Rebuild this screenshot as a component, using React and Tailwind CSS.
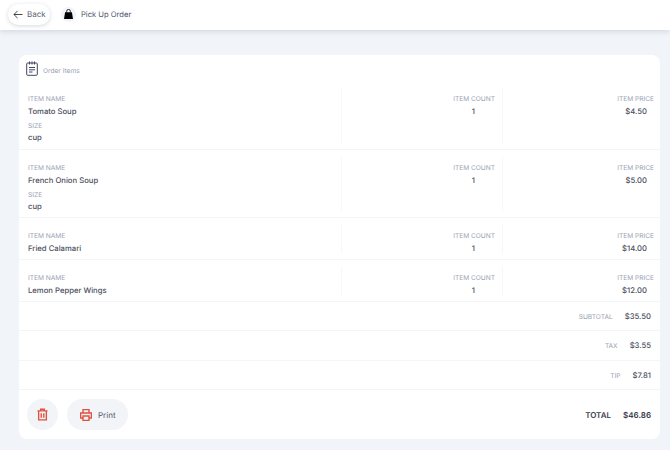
import React from "react";

const font = { fontFamily: "Inter, sans-serif" };

function Label({ children, className = "" }) {
  return <div className={"text-[6.6px] leading-[10px] text-[#9a9fb3] uppercase " + className}>{children}</div>;
}
function Val({ children, className = "" }) {
  return <div className={"text-[7.7px] leading-[12px] font-medium text-[#4b4f60] " + className}>{children}</div>;
}

function Row({ name, count, price, size, h }) {
  return (
    <div className={"flex border-b border-[#f4f5f9] pt-[7px] pb-[6px] " + h}>
      <div className="w-[323px] pl-[9px] pt-[6px] border-r border-[#f6f7fa]">
        <Label>Item Name</Label>
        <Val className="mt-[1.6px]">{name}</Val>
        {size && (
          <>
            <Label className="mt-[3px]">Size</Label>
            <Val className="mt-[1px]">{size}</Val>
          </>
        )}
      </div>
      <div className="w-[161px] pr-[7px] pt-[6px] border-r border-[#f6f7fa] flex flex-col items-end">
        <Label>Item Count</Label>
        <Val className="mt-[1.6px] pr-[20px]">{count}</Val>
      </div>
      <div className="flex-1 pr-[6px] pt-[6px] flex flex-col items-end">
        <Label>Item Price</Label>
        <Val className="mt-[1.6px] pr-[7px]">{price}</Val>
      </div>
    </div>
  );
}

function Summary({ label, value, h }) {
  return (
    <div className={"flex items-center justify-end pr-[9px] gap-[12px] border-b border-[#f4f5f9] " + h}>
      <Label>{label}</Label>
      <Val>{value}</Val>
    </div>
  );
}

export default function App() {
  return (
    <div style={font} className="w-[670px] h-[450px] bg-[#f1f4f9] overflow-hidden [text-rendering:geometricPrecision]">
      <header className="h-[30px] bg-white shadow-[0_1px_6px_rgba(50,60,90,0.18)] flex items-center pl-[8px] pb-[2px]">
        <div className="h-[21px] w-[42px] rounded-full bg-white shadow-[0_1px_4px_rgba(50,60,90,0.2)] flex items-center pl-[5px] gap-[4px] text-[8px] text-[#5a5f70]">
          <svg width="10" height="9" viewBox="0 0 11 10" fill="none" stroke="#333" strokeWidth="1">
            <path d="M10.5 5H1M5 1L1 5l4 4" />
          </svg>
          Back
        </div>
        <div className="ml-[11px] w-[15px] h-[15px] rounded-full bg-[#eef5fc] flex items-center justify-center">
          <svg width="9" height="10" viewBox="0 0 10 11">
            <path d="M1.2 3.6h7.6L10 11H0z" fill="#000" />
            <path d="M3 4V2.4a2 2 0 0 1 4 0V4" fill="none" stroke="#000" strokeWidth="0.9" />
          </svg>
        </div>
        <div className="ml-[5px] pt-[1px] text-[7.6px] text-[#50556a]">Pick Up Order</div>
      </header>

      <main className="mt-[25px] mx-[19px] w-[641px] h-[384px] bg-white rounded-[8px] flex flex-col">
        <div className="h-[26px] shrink-0 flex items-end pl-[7px] gap-[5px]">
          <svg width="12" height="15" viewBox="0 0 12 15" fill="none" stroke="#3f4560" strokeWidth="1" className="mb-[5px]">
            <rect x="0.7" y="2" width="10.6" height="12.3" rx="1" />
            <path d="M3.5 0.5v3M6 0.5v3M8.5 0.5v3M3 6.5h6M3 8.8h6M3 11h3.5" />
          </svg>
          <div className="text-[6.6px] leading-[10px] text-[#9a9fb3] mb-[5px]">Order Items</div>
        </div>
        <Row name="Tomato Soup" count="1" price="$4.50" size="cup" h="h-[69px]" />
        <Row name="French Onion Soup" count="1" price="$5.00" size="cup" h="h-[68px]" />
        <Row name="Fried Calamari" count="1" price="$14.00" h="h-[42px]" />
        <Row name="Lemon Pepper Wings" count="1" price="$12.00" h="h-[42px]" />
        <Summary label="Subtotal" value="$35.50" h="h-[29px] pt-[1px]" />
        <Summary label="Tax" value="$3.55" h="h-[30px] pt-[1px]" />
        <Summary label="Tip" value="$7.81" h="h-[29px] pt-[2px]" />
        <div className="flex-1 flex items-center pl-[8px] pr-[9px]">
          <div className="w-[31px] h-[31px] rounded-full bg-[#f3f4f8] flex items-center justify-center">
            <svg width="11" height="13" viewBox="0 0 12 13" fill="none" stroke="#e0513f" strokeWidth="1.5">
              <path d="M0.5 2.5h11M4 2.5V.8h4v1.7M1.8 2.5v9.8h8.4V2.5M4.6 5v5M7.4 5v5" />
            </svg>
          </div>
          <div className="ml-[9px] w-[61px] h-[31px] rounded-full bg-[#f3f4f8] flex items-center pl-[13px] gap-[6px] text-[8px] text-[#50556a]">
            <svg width="12" height="12" viewBox="0 0 12 12" fill="none" stroke="#e0513f" strokeWidth="1.4">
              <path d="M3 4V.6h6V4M3 9H.6V4h10.8v5H9M3 7h6v4.4H3z" />
            </svg>
            Print
          </div>
          <div className="ml-auto flex items-center gap-[12px] text-[8px] font-semibold text-[#3a3e4e]">
            <span>TOTAL</span>
            <span>$46.86</span>
          </div>
        </div>
      </main>
    </div>
  );
}
